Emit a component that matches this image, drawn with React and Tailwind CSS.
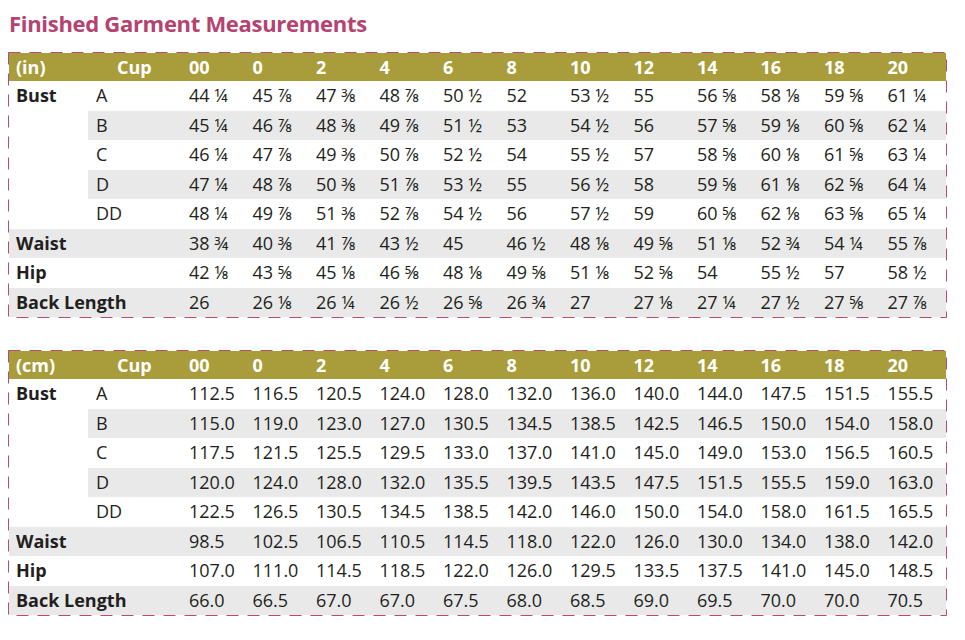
const SIZES = ['00', '0', '2', '4', '6', '8', '10', '12', '14', '16', '18', '20'];

const INCHES = [
  { label: 'Bust', cup: 'A', values: ['44 ¼', '45 ⅞', '47 ⅜', '48 ⅞', '50 ½', '52', '53 ½', '55', '56 ⅝', '58 ⅛', '59 ⅝', '61 ¼'] },
  { cup: 'B', values: ['45 ¼', '46 ⅞', '48 ⅜', '49 ⅞', '51 ½', '53', '54 ½', '56', '57 ⅝', '59 ⅛', '60 ⅝', '62 ¼'] },
  { cup: 'C', values: ['46 ¼', '47 ⅞', '49 ⅜', '50 ⅞', '52 ½', '54', '55 ½', '57', '58 ⅝', '60 ⅛', '61 ⅝', '63 ¼'] },
  { cup: 'D', values: ['47 ¼', '48 ⅞', '50 ⅜', '51 ⅞', '53 ½', '55', '56 ½', '58', '59 ⅝', '61 ⅛', '62 ⅝', '64 ¼'] },
  { cup: 'DD', values: ['48 ¼', '49 ⅞', '51 ⅜', '52 ⅞', '54 ½', '56', '57 ½', '59', '60 ⅝', '62 ⅛', '63 ⅝', '65 ¼'] },
  { label: 'Waist', values: ['38 ¾', '40 ⅜', '41 ⅞', '43 ½', '45', '46 ½', '48 ⅛', '49 ⅝', '51 ⅛', '52 ¾', '54 ¼', '55 ⅞'] },
  { label: 'Hip', values: ['42 ⅛', '43 ⅝', '45 ⅛', '46 ⅝', '48 ⅛', '49 ⅝', '51 ⅛', '52 ⅝', '54', '55 ½', '57', '58 ½'] },
  { label: 'Back Length', values: ['26', '26 ⅛', '26 ¼', '26 ½', '26 ⅝', '26 ¾', '27', '27 ⅛', '27 ¼', '27 ½', '27 ⅝', '27 ⅞'] },
];

const CENTIMETRES = [
  { label: 'Bust', cup: 'A', values: ['112.5', '116.5', '120.5', '124.0', '128.0', '132.0', '136.0', '140.0', '144.0', '147.5', '151.5', '155.5'] },
  { cup: 'B', values: ['115.0', '119.0', '123.0', '127.0', '130.5', '134.5', '138.5', '142.5', '146.5', '150.0', '154.0', '158.0'] },
  { cup: 'C', values: ['117.5', '121.5', '125.5', '129.5', '133.0', '137.0', '141.0', '145.0', '149.0', '153.0', '156.5', '160.5'] },
  { cup: 'D', values: ['120.0', '124.0', '128.0', '132.0', '135.5', '139.5', '143.5', '147.5', '151.5', '155.5', '159.0', '163.0'] },
  { cup: 'DD', values: ['122.5', '126.5', '130.5', '134.5', '138.5', '142.0', '146.0', '150.0', '154.0', '158.0', '161.5', '165.5'] },
  { label: 'Waist', values: ['98.5', '102.5', '106.5', '110.5', '114.5', '118.0', '122.0', '126.0', '130.0', '134.0', '138.0', '142.0'] },
  { label: 'Hip', values: ['107.0', '111.0', '114.5', '118.5', '122.0', '126.0', '129.5', '133.5', '137.5', '141.0', '145.0', '148.5'] },
  { label: 'Back Length', values: ['66.0', '66.5', '67.0', '67.0', '67.5', '68.0', '68.5', '69.0', '69.5', '70.0', '70.0', '70.5'] },
];

// B and D rows are shaded from the cup column on, Waist and Back Length across the whole row
const SHADE = ['none', 'cup', 'none', 'cup', 'none', 'full', 'none', 'full'];

const ROW_GRID = 'grid grid-cols-[79px_96px_repeat(12,1fr)]';

function MeasureTable({ unit, rows }) {
  return (
    <div className="relative ml-2 w-[939px] p-px">
      {/* dashed frame */}
      <svg className="pointer-events-none absolute inset-0 h-full w-full">
        <rect
          x="0.5"
          y="0.5"
          width="938"
          fill="none"
          stroke="#b44d70"
          strokeWidth="1"
          strokeDasharray="12 9"
          style={{ height: 'calc(100% - 1px)' }}
        />
      </svg>

      {/* Header */}
      <div className={`${ROW_GRID} h-[28px] items-center bg-[#a99c3a] text-[18px] font-bold text-white`}>
        <div className="pl-[7px]">{unit}</div>
        <div className="pl-[29px]">Cup</div>
        {SIZES.map((s) => (
          <div key={s} className="pl-[5px]">{s}</div>
        ))}
      </div>

      {/* Rows */}
      {rows.map((row, i) => {
        const shade = SHADE[i];
        return (
          <div
            key={i}
            className={`${ROW_GRID} h-[29.5px] text-[18px] text-[#231f20] ${shade === 'full' ? 'bg-[#e9e9e9]' : ''}`}
          >
            {row.cup ? (
              <>
                <div className="flex items-center pl-[7px] font-bold">{row.label}</div>
                <div className={`flex items-center pl-2 ${shade === 'cup' ? 'bg-[#e9e9e9]' : ''}`}>{row.cup}</div>
              </>
            ) : (
              <div className="col-span-2 flex items-center whitespace-nowrap pl-[7px] font-bold">{row.label}</div>
            )}
            {row.values.map((v, j) => (
              <div
                key={j}
                className={`flex items-center whitespace-nowrap pl-[5px] ${shade === 'cup' ? 'bg-[#e9e9e9]' : ''}`}
              >
                {v}
              </div>
            ))}
          </div>
        );
      })}
    </div>
  );
}

export default function App() {
  return (
    <div className="min-h-[640px] w-[965px] bg-white pt-2 font-['Open_Sans',sans-serif]">
      <h1 className="ml-[9px] h-[30px] text-[22px] font-bold leading-[30px] tracking-[-0.3px] text-[#b5426f]">
        Finished Garment Measurements
      </h1>
      <div className="mt-[14px]">
        <MeasureTable unit="(in)" rows={INCHES} />
      </div>
      <div className="mt-[32px]">
        <MeasureTable unit="(cm)" rows={CENTIMETRES} />
      </div>
    </div>
  );
}
